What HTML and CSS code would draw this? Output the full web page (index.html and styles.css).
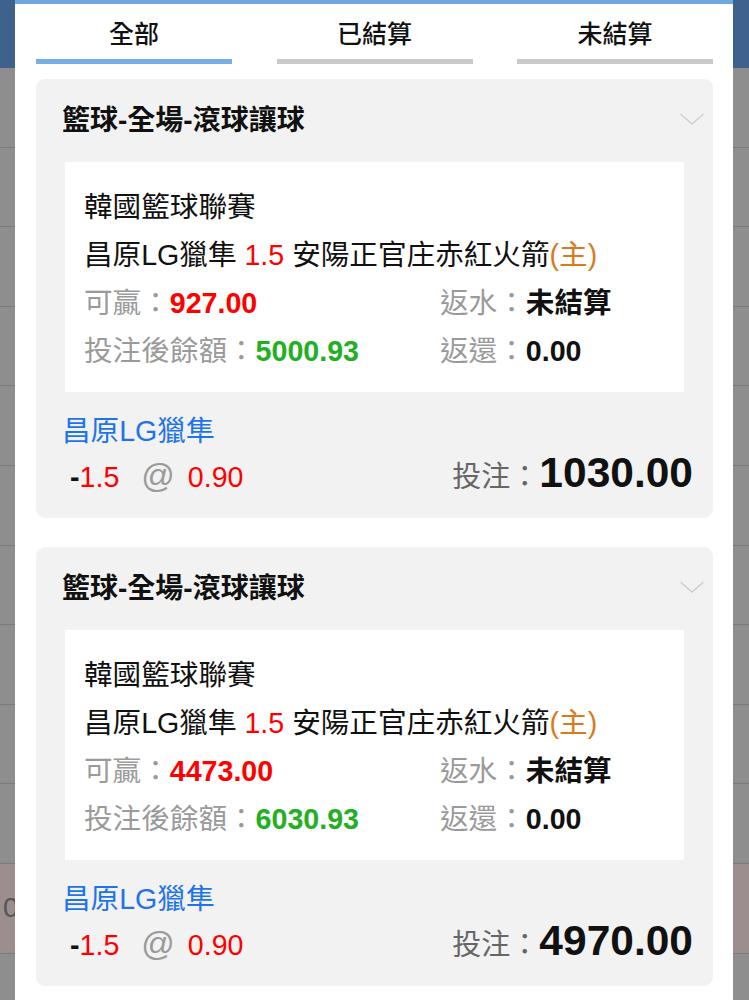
FILE: index.html
```html
<!DOCTYPE html>
<html lang="zh-Hant">
<head>
<meta charset="utf-8">
<title>注單</title>
<link rel="stylesheet" href="styles.css">
</head>
<body>
<div class="page">
  <div class="page-top"></div>
  <div class="page-row"></div>
  <div class="page-row"></div>
  <div class="page-row"></div>
  <div class="page-row"></div>
  <div class="page-row"></div>
  <div class="page-row"></div>
  <div class="page-row"></div>
  <div class="page-row"></div>
  <div class="page-row"></div>
  <div class="page-row"></div>
  <div class="page-row page-row-pink"><span class="page-zero">0</span></div>
  <div class="page-row"></div>
</div>

<div class="modal">
  <nav class="tabs">
    <div class="tab tab-active">全部</div>
    <div class="tab">已結算</div>
    <div class="tab">未結算</div>
  </nav>

  <section class="bet-card">
    <header class="bet-head">
      <h2 class="bet-title">籃球-全場-滾球讓球</h2>
      <svg class="chev" width="26" height="14" viewBox="0 0 26 14"><polyline points="1.5,2 13,12 24.5,2" fill="none" stroke="#cfcfcf" stroke-width="1.6"/></svg>
    </header>
    <div class="bet-detail">
      <p class="line">韓國籃球聯賽</p>
      <p class="line">昌原LG獵隼 <span class="red">1.5</span> 安陽正官庄赤紅火箭<span class="home">(主)</span></p>
      <div class="stats">
        <p class="line"><span class="lbl">可贏：</span><b class="red">927.00</b></p>
        <p class="line"><span class="lbl">返水：</span><b>未結算</b></p>
        <p class="line"><span class="lbl">投注後餘額：</span><b class="green">5000.93</b></p>
        <p class="line"><span class="lbl">返還：</span><b>0.00</b></p>
      </div>
    </div>
    <div class="bet-foot">
      <div class="pick">
        <p class="team">昌原LG獵隼</p>
        <p class="odds"><b class="minus">-</b><span class="red">1.5</span><span class="at">@</span><span class="red">0.90</span></p>
      </div>
      <p class="stake"><span class="stake-lbl">投注：</span><b class="stake-amt">1030.00</b></p>
    </div>
  </section>

  <section class="bet-card">
    <header class="bet-head">
      <h2 class="bet-title">籃球-全場-滾球讓球</h2>
      <svg class="chev" width="26" height="14" viewBox="0 0 26 14"><polyline points="1.5,2 13,12 24.5,2" fill="none" stroke="#cfcfcf" stroke-width="1.6"/></svg>
    </header>
    <div class="bet-detail">
      <p class="line">韓國籃球聯賽</p>
      <p class="line">昌原LG獵隼 <span class="red">1.5</span> 安陽正官庄赤紅火箭<span class="home">(主)</span></p>
      <div class="stats">
        <p class="line"><span class="lbl">可贏：</span><b class="red">4473.00</b></p>
        <p class="line"><span class="lbl">返水：</span><b>未結算</b></p>
        <p class="line"><span class="lbl">投注後餘額：</span><b class="green">6030.93</b></p>
        <p class="line"><span class="lbl">返還：</span><b>0.00</b></p>
      </div>
    </div>
    <div class="bet-foot">
      <div class="pick">
        <p class="team">昌原LG獵隼</p>
        <p class="odds"><b class="minus">-</b><span class="red">1.5</span><span class="at">@</span><span class="red">0.90</span></p>
      </div>
      <p class="stake"><span class="stake-lbl">投注：</span><b class="stake-amt">4970.00</b></p>
    </div>
  </section>
</div>
</body>
</html>
```

FILE: styles.css
```css
* { box-sizing: border-box; }
html, body {
  margin: 0;
  padding: 0;
  width: 749px;
  height: 1000px;
  overflow: hidden;
  font-family: "Liberation Sans", "Noto Sans CJK TC", sans-serif;
  color: #111;
}
p, h2 { margin: 0; }

/* dimmed page behind the modal */
.page {
  display: flex;
  flex-direction: column;
  background: #8e8e8e;
  height: 1000px;
}
.page-top {
  height: 68px;
  background: #3e628d;
  flex: none;
}
.page-row {
  height: 79.6px;
  flex: none;
  border-bottom: 1px solid #7a7a7a;
  background: #8e8e8e;
  display: flex;
  align-items: center;
}
.page-row-pink {
  height: 90px;
  background: #9c8e8e;
}
.page-zero {
  font-size: 28px;
  color: #555;
  margin-left: 3px;
}

/* modal */
.modal {
  position: absolute;
  top: 0;
  left: 15px;
  width: 718px;
  height: 1000px;
  overflow: hidden;
  background: #fff;
  border-top: 4px solid #6fa7df;
  padding: 0 20px 0 21px;
}

.tabs {
  display: flex;
  justify-content: space-between;
}
.tab {
  width: 196px;
  text-align: center;
  font-size: 25px;
  font-weight: 500;
  line-height: 34px;
  padding-top: 13px;
  padding-bottom: 8px;
  border-bottom: 5px solid #cacaca;
  color: #111;
}
.tab-active {
  border-bottom-color: #78afe3;
}

.bet-card {
  margin-top: 15px;
  background: #f2f2f2;
  border-radius: 9px;
  margin-bottom: 29px;
  padding: 0 20px 18px 26px;
}
.bet-card + .bet-card { margin-top: 0; }

.bet-head {
  height: 83px;
  display: flex;
  align-items: center;
  justify-content: space-between;
}
.bet-title {
  font-size: 28px;
  font-weight: bold;
  color: #111;
  margin-top: -5px;
}
.chev {
  margin-right: -12px;
  margin-top: -4px;
}

.bet-detail {
  background: #fff;
  margin: 0 9px 0 3px;
  padding: 21px 19px 17px 19px;
}
.line {
  font-size: 28.6px;
  line-height: 48px;
  white-space: nowrap;
}
.stats {
  display: grid;
  grid-template-columns: 356px 1fr;
}
.lbl { color: #9a9a9a; }
.red { color: #ff0000; }
.green { color: #22b022; }
.home { color: #d97b1c; }

.bet-foot {
  display: flex;
  justify-content: space-between;
  align-items: flex-end;
  padding-top: 17px;
}
.team {
  font-size: 28.6px;
  line-height: 44px;
  color: #1f74ea;
}
.odds {
  font-size: 28.6px;
  line-height: 46px;
  padding-left: 8px;
  white-space: nowrap;
}
.minus { color: #111; }
.at {
  color: #9a9a9a;
  font-size: 33px;
  margin: 0 13px 0 22px;
}
.stake {
  white-space: nowrap;
  line-height: 56px;
  margin-bottom: -10px;
}
.stake-lbl {
  font-size: 29px;
  color: #666;
}
.stake-amt {
  font-size: 42.5px;
  color: #111;
}
```
